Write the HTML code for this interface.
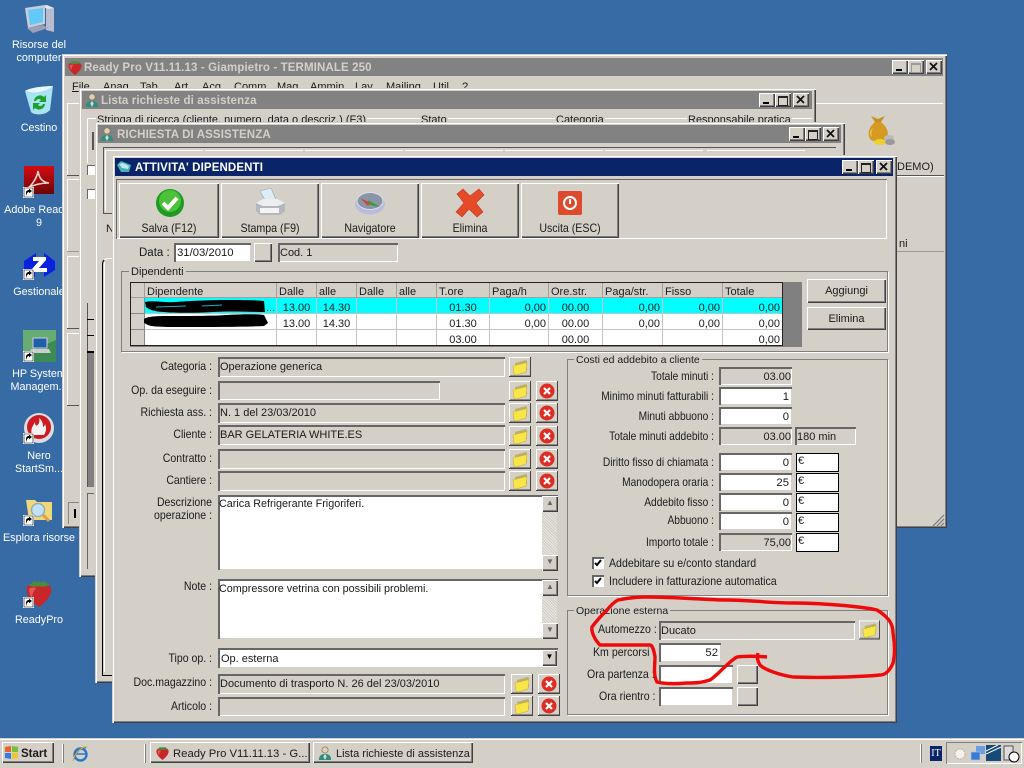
<!DOCTYPE html>
<html><head><meta charset="utf-8"><style>
html,body{margin:0;padding:0}
body{width:1024px;height:768px;overflow:hidden;position:relative;background:#376ba6;font:11px/14px "Liberation Sans",Arial,sans-serif;color:#1a1a1a}
div,svg{position:absolute}
.t{position:absolute;white-space:nowrap;height:14px;line-height:14px;margin-top:1px}
.l{position:absolute;left:112px;width:100px;text-align:right;white-space:nowrap;height:14px;line-height:14px;font-size:12px;transform:scaleX(.878);transform-origin:100% 50%}
.r{position:absolute;left:568px;width:146px;text-align:right;white-space:nowrap;height:14px;line-height:14px;font-size:12px;transform:scaleX(.85);transform-origin:100% 50%}
.c{font-size:12px;transform:scaleX(.882);transform-origin:0 50%}
.bt{font-size:12px;transform:scaleX(.885);transform-origin:50% 50%;margin-top:0}
.d{color:#fff;text-align:center;width:78px;left:0;line-height:13px;white-space:nowrap;font-size:10.8px}
.win{background:#d4d0c8;box-shadow:inset 1px 1px #d4d0c8,inset 2px 2px #fff,inset -1px -1px #404040,inset -2px -2px #808080}
.tb{height:18px;background:#828282}
.tt{position:absolute;font-weight:bold;color:#d4d0c8;font-size:11.5px;line-height:18px;white-space:nowrap;letter-spacing:.12px;margin-top:1px}
.btn{background:#d4d0c8;box-shadow:inset 1px 1px #fff,inset -1px -1px #404040,inset -2px -2px #808080;text-align:center}
.sb{width:16px;height:14px;background:#d4d0c8;box-shadow:inset 1px 1px #fff,inset -1px -1px #404040,inset -2px -2px #808080}
.sunk{background:#d4d0c8;box-shadow:inset 2px 2px #666,inset -1px -1px #fff}
.inp{background:#fff;box-shadow:inset 2px 2px #666,inset -1px -1px #d4d0c8;text-align:right;line-height:18px;box-sizing:border-box;padding-right:3px;padding-top:1px;white-space:nowrap;font-size:11.3px}
.eu{background:#fff;box-shadow:inset 0 0 0 1px #000;line-height:16px;box-sizing:border-box;padding-left:2px;font-size:11px}
.sunk.txt{line-height:18px;padding-left:2px;padding-top:1px;box-sizing:border-box;white-space:nowrap;overflow:hidden;font-size:11px}
.grp{box-shadow:inset 0 0 0 1px #808080,1px 1px #fff}
.lb{position:absolute;background:#d4d0c8;padding:0 2px;white-space:nowrap;line-height:13px;margin-top:1px}
table{border-collapse:collapse;table-layout:fixed;position:absolute}
td{padding:6px 2px 0;height:9px;border:1px solid #c4c4c4;line-height:9px;text-align:right;white-space:nowrap;font-size:11px}
tr.h td{background:#d4d0c8;text-align:left;border-color:#a0a0a0;border-top:0}
td.f{background:#d4d0c8;border-color:#888}
tr.s td{background:#00ffff}
tr.s td.f{background:#d4d0c8}
.ln{height:1px;background:#fff}
.dk{background:#555}
.ar{font-size:8px;line-height:14px;color:#666}
.tk{background:repeating-linear-gradient(45deg,#e8e6e0 0 1px,#cfccc4 1px 2px)}
.m{position:absolute;top:80px;white-space:nowrap;line-height:14px}
</style></head><body>

<svg width="0" height="0" style="position:absolute"><defs>
<symbol id="sb" viewBox="0 0 32 32"><path d="M16 31C8 25 2 18 3 11c1-4 6-5 13-4 7-1 12 0 13 4 1 7-5 14-13 20z" fill="#c9262a"/><path d="M6 11c3-1 5-1 7 0-3 3-5 7-4 11C6 18 5 14 6 11z" fill="#e2585a"/><path d="M5 7c4-1 4-3 6-4 1 2 3 2 5 0 2 2 3 2 5 0 2 1 3 3 6 4-3 3-8 2-11 2S8 10 5 7z" fill="#4d8a3a"/></symbol>
<symbol id="pers" viewBox="0 0 16 16"><circle cx="8" cy="4.500" r="3.600" fill="#e4cdb0" stroke="#7a7a60" stroke-width=".8"/><path d="M1 16c0-5 3-7 7-7s7 2 7 7z" fill="#2f8f7f"/><path d="M8 9l-2 3 2 4 2-4z" fill="#d8d8d8"/></symbol>
<symbol id="fold" viewBox="0 0 22 22"><path d="M0 1h22v20H0z" fill="#d4d0c8"/><path d="M0 1h21v1H1v18H0z" fill="#fff"/><path d="M0 21h22V1h-1v19H0z" fill="#444"/><path d="M1 20h20v-1H1z" fill="#888"/><path d="M6 7l11-3 1 1v9l-11 3z" fill="#bbb06a"/><path d="M4 10l12-3 2 0-1 9-10 3-2-1z" fill="#f8e648" stroke="#c8b040" stroke-width=".6"/></symbol>
<symbol id="del" viewBox="0 0 22 22"><path d="M0 1h22v20H0z" fill="#d4d0c8"/><path d="M0 1h21v1H1v18H0z" fill="#fff"/><path d="M0 21h22V1h-1v19H0z" fill="#444"/><path d="M1 20h20v-1H1z" fill="#888"/><circle cx="11" cy="11" r="7.500" fill="#dc2e22"/><path d="M8 8l6 6M14 8l-6 6" stroke="#fff" stroke-width="2.200"/></symbol>
<symbol id="sc" viewBox="0 0 11 11"><path d="M0 0h11v11H0z" fill="#fff"/><path d="M1 1h9v9H1z" fill="#fff" stroke="#000" stroke-width=".6"/><path d="M3 9V6c0-2 1-3 3-3V1.800L9 4 6 6.300V5C4.500 5 4 6 3 9z" fill="#000"/></symbol>
</defs></svg>

<!-- desktop icons -->
<svg style="left:22px;top:2px" width="34" height="34" viewBox="0 0 34 34"><path d="M24 4l8 2v24l-8-2z" fill="#b8bcd0"/><path d="M19 4l6-1 7 3-6 1z" fill="#e4e6f0"/><path d="M3 6l20-3v19L6 26z" fill="#c8ccd8"/><path d="M6 8l15-2v14L8 23z" fill="#62c8f6"/><path d="M5 26l16-3 5 3-15 5z" fill="#9aa0b8"/></svg>
<div class="t d" style="top:38px">Risorse del<br>computer</div>
<svg style="left:23px;top:84px" width="32" height="34" viewBox="0 0 32 34"><path d="M2 7c8 3 20 2 28-5l-3 24c-4 5-15 6-19 2z" fill="#a9e3f2"/><path d="M2 7c8 3 20 2 28-5-6 0-22 1-28 5z" fill="#e6f8fc"/><path d="M11 17a6 6 0 0 1 10-4l2-2v7h-7l2-2a3 3 0 0 0-5 1zM22 20a6 6 0 0 1-10 4l-2 2v-7h7l-2 2a3 3 0 0 0 5-1z" fill="#1ea02e"/></svg>
<div class="t d" style="top:121px">Cestino</div>
<svg style="left:24px;top:166px" width="30" height="30" viewBox="0 0 30 30"><defs><linearGradient id="ag" x1="0" y1="0" x2="0" y2="1"><stop offset="0" stop-color="#d40c12"/><stop offset="1" stop-color="#6e0407"/></linearGradient></defs><rect width="30" height="28" fill="url(#ag)"/><path d="M4 22c4-3 9-10 10-17 1 6 3 11 11 12-7 0-14 1-21 5z" fill="none" stroke="#f3d3d0" stroke-width="1.600"/></svg>
<svg style="left:23px;top:187px" width="11" height="11"><use href="#sc"/></svg>
<div class="t d" style="top:203px">Adobe Reader<br>9</div>
<svg style="left:24px;top:252px" width="31" height="28" viewBox="0 0 31 28"><path d="M0 9L12 1v6h8V1l11 8v9l-11 7v-5H11v5L0 18z" fill="#0a22e0"/><path d="M9 5h13v3L15 16h8v4H8v-3l7-8H9z" fill="#fff"/></svg>
<svg style="left:23px;top:269px" width="11" height="11"><use href="#sc"/></svg>
<div class="t d" style="top:285px">Gestionale</div>
<svg style="left:23px;top:330px" width="33" height="32" viewBox="0 0 33 32"><rect width="33" height="32" fill="#67ac72"/><path d="M0 24l33-14v22H0z" fill="#3c8a54"/><rect x="10" y="8" width="14" height="10" fill="#1d5fa8" stroke="#ccd"/><path d="M8 19h18l2 4H7z" fill="#ccc"/></svg>
<svg style="left:23px;top:351px" width="11" height="11"><use href="#sc"/></svg>
<div class="t d" style="top:367px">HP System<br>Managem...</div>
<svg style="left:23px;top:412px" width="32" height="32" viewBox="0 0 32 32"><circle cx="16" cy="16" r="15" fill="#ddd"/><circle cx="16" cy="15" r="12" fill="#cc1b22"/><path d="M9 23c-2-6 1-9 3-13 0 4 2 5 4 1 1-3 0-5 0-5 4 3 4 7 4 9 2-1 2-3 2-3 2 4 1 8-1 11z" fill="#f2f2f2"/></svg>
<svg style="left:23px;top:433px" width="11" height="11"><use href="#sc"/></svg>
<div class="t d" style="top:449px">Nero<br>StartSm...</div>
<svg style="left:25px;top:496px" width="30" height="30" viewBox="0 0 30 30"><path d="M1 4h9l2 2h15v18H4z" fill="#f0d778"/><circle cx="13" cy="14" r="6.500" fill="#bfe2f6" stroke="#9ab" stroke-width="1.500"/><path d="M18 19l6 6" stroke="#d8a050" stroke-width="3"/></svg>
<svg style="left:23px;top:515px" width="11" height="11"><use href="#sc"/></svg>
<div class="t d" style="top:531px">Esplora risorse</div>
<svg style="left:24px;top:576px" width="30" height="34"><use href="#sb"/></svg>
<svg style="left:23px;top:597px" width="11" height="11"><use href="#sc"/></svg>
<div class="t d" style="top:613px">ReadyPro</div>

<!-- main window -->
<div class="win" style="left:62px;top:54px;width:885px;height:474px"></div>
<div class="tb" style="left:65px;top:58px;width:878px"></div>
<svg style="left:67px;top:59px" width="16" height="17"><use href="#sb"/></svg>
<div class="tt" style="left:84px;top:58px">Ready Pro V11.11.13 - Giampietro - TERMINALE 250</div>
<div class="sb" style="left:892px;top:60px"></div><div style="left:896px;top:69px;width:6px;height:2px;background:#000"></div>
<div class="sb" style="left:908px;top:60px"></div><div style="left:911px;top:63px;width:8px;height:7px;border:1px solid #999;border-top-width:2px"></div>
<div class="sb" style="left:926px;top:60px"></div><svg style="left:926px;top:60px" width="16" height="14"><path d="M4 3l7 7M11 3l-7 7" stroke="#111" stroke-width="1.800"/></svg>
<span class="m" style="left:72px"><u>F</u>ile</span><span class="m" style="left:103px">Anag.</span><span class="m" style="left:140px">Tab.</span><span class="m" style="left:174px">Art.</span><span class="m" style="left:202px">Acq.</span><span class="m" style="left:234px">Comm.</span><span class="m" style="left:277px">Mag.</span><span class="m" style="left:310px">Ammin.</span><span class="m" style="left:355px">Lav.</span><span class="m" style="left:386px">Mailing</span><span class="m" style="left:433px">Util.</span><span class="m" style="left:462px">?</span>

<div class="ln" style="left:815px;top:103px;width:128px"></div>
<svg style="left:864px;top:115px" width="32" height="34" viewBox="0 0 32 34"><path d="M7 1l7 3 7-3-4 6h-6z" fill="#c88f1e"/><path d="M11 7h6c6 5 8 10 6 16-2 5-14 5-17 1C3 18 5 12 11 7z" fill="#d49a24"/><path d="M9 13c-2 3-2 6-1 9-3-3-2-7 1-9z" fill="#f2cf6e"/><ellipse cx="16" cy="27" rx="6" ry="3" fill="#ecd22a"/><ellipse cx="25" cy="23" rx="5" ry="3" fill="#bbb"/><ellipse cx="26" cy="27" rx="5" ry="3" fill="#999"/></svg>
<div class="t" style="left:897px;top:159px">DEMO)</div>
<div class="dk" style="left:897px;top:175px;width:47px;height:1px"></div><div class="ln" style="left:897px;top:176px;width:47px"></div>
<div class="t" style="left:899px;top:236px">ni</div>
<div class="ln" style="left:897px;top:251px;width:47px;background:#999"></div>
<svg style="left:932px;top:514px" width="13" height="13" viewBox="0 0 13 13"><path d="M12 1L1 12M12 5L5 12M12 9l-3 3" stroke="#777" stroke-width="1.200"/></svg>
<div class="ln" style="left:67px;top:103px;width:12px"></div><div class="ln" style="left:67px;top:103px;width:1px;height:72px"></div><div class="dk" style="left:67px;top:175px;width:12px;height:1px"></div>
<div class="ln" style="left:67px;top:179px;width:12px"></div><div class="ln" style="left:67px;top:179px;width:1px;height:72px"></div><div class="dk" style="left:67px;top:251px;width:12px;height:1px;background:#999"></div>
<div class="ln" style="left:67px;top:256px;width:12px"></div><div class="ln" style="left:67px;top:256px;width:1px;height:72px"></div><div class="dk" style="left:67px;top:328px;width:12px;height:1px"></div>
<div class="ln" style="left:67px;top:333px;width:12px"></div><div class="ln" style="left:67px;top:333px;width:1px;height:72px"></div><div class="dk" style="left:67px;top:405px;width:12px;height:1px"></div>
<div style="left:68px;top:502px;width:11px;height:22px;box-shadow:inset 1px 1px #888"></div><div style="left:74px;top:509px;width:2px;height:9px;background:#000"></div>

<!-- Lista window -->
<div class="win" style="left:79px;top:88px;width:737px;height:489px"></div>
<div class="tb" style="left:82px;top:91px;width:730px"></div>
<svg style="left:85px;top:92px" width="14" height="16"><use href="#pers"/></svg>
<div class="tt" style="left:101px;top:91px">Lista richieste di assistenza</div>
<div class="sb" style="left:759px;top:93px"></div><div style="left:763px;top:102px;width:6px;height:2px;background:#000"></div>
<div class="sb" style="left:775px;top:93px"></div><div style="left:778px;top:96px;width:8px;height:7px;border:1px solid #222;border-top-width:2px"></div>
<div class="sb" style="left:793px;top:93px"></div><svg style="left:793px;top:93px" width="16" height="14"><path d="M4 3l7 7M11 3l-7 7" stroke="#111" stroke-width="1.800"/></svg>
<div class="ln" style="left:87px;top:118px;width:725px"></div>
<div class="ln" style="left:87px;top:118px;width:1px;height:45px"></div>
<div style="left:92px;top:132px;width:2px;height:18px;background:#555"></div>
<div class="t" style="left:96px;top:112px;background:#d4d0c8;padding:0 1px">Stringa di ricerca (cliente, numero, data o descriz.) (F3)</div>
<div class="t" style="left:420px;top:112px;background:#d4d0c8;padding:0 1px">Stato</div>
<div class="t" style="left:555px;top:112px;background:#d4d0c8;padding:0 1px">Categoria</div>
<div class="t" style="left:687px;top:112px;background:#d4d0c8;padding:0 1px">Responsabile pratica</div>
<div style="left:87px;top:165px;width:8px;height:10px;background:#fff;box-shadow:inset 1px 1px #666"></div>
<div style="left:87px;top:189px;width:8px;height:10px;background:#fff;box-shadow:inset 1px 1px #666"></div>
<div style="left:87px;top:303px;width:7px;height:184px;background:#808080;box-shadow:inset 1px 0 #555"></div>
<div style="left:87px;top:303px;width:7px;height:49px;background:#d4d0c8;box-shadow:inset 1px 0 #555"></div>
<div style="left:87px;top:319px;width:7px;height:1px;background:#000"></div><div style="left:87px;top:335px;width:7px;height:1px;background:#000"></div><div style="left:87px;top:351px;width:7px;height:2px;background:#000"></div>
<div style="left:87px;top:493px;width:7px;height:76px;box-shadow:inset 1px 1px #666;background:#d4d0c8"></div>

<!-- Richiesta window -->
<div class="win" style="left:95px;top:122px;width:750px;height:561px"></div>
<div class="tb" style="left:98px;top:125px;width:743px"></div>
<svg style="left:100px;top:126px" width="14" height="16"><use href="#pers"/></svg>
<div class="tt" style="left:117px;top:125px">RICHIESTA DI ASSISTENZA</div>
<div class="sb" style="left:789px;top:127px"></div><div style="left:793px;top:136px;width:6px;height:2px;background:#000"></div>
<div class="sb" style="left:805px;top:127px"></div><div style="left:808px;top:130px;width:8px;height:7px;border:1px solid #222;border-top-width:2px"></div>
<div class="sb" style="left:823px;top:127px"></div><svg style="left:823px;top:127px" width="16" height="14"><path d="M4 3l7 7M11 3l-7 7" stroke="#111" stroke-width="1.800"/></svg>
<div class="dk" style="left:103px;top:147px;width:733px;height:1px"></div>
<div class="ln" style="left:105px;top:150px;width:98px"></div><div class="ln" style="left:205px;top:150px;width:98px"></div><div class="ln" style="left:305px;top:150px;width:98px"></div><div class="ln" style="left:405px;top:150px;width:98px"></div><div class="ln" style="left:505px;top:150px;width:98px"></div><div class="ln" style="left:605px;top:150px;width:98px"></div><div class="ln" style="left:707px;top:150px;width:98px"></div>
<div class="dk" style="left:103px;top:147px;width:1px;height:66px"></div>
<div class="ln" style="left:105px;top:150px;width:1px;height:61px"></div>
<div class="dk" style="left:103px;top:213px;width:9px;height:1px"></div>
<div class="t" style="left:106px;top:221px">N</div>
<div style="left:102px;top:258px;width:10px;height:418px;border-left:1px solid #000;border-top:1px solid #fff;border-bottom:1px solid #000;border-top-left-radius:6px;box-sizing:border-box"></div>
<div class="ln" style="left:104px;top:262px;width:1px;height:410px"></div>

<!-- Attivita window -->
<div class="win" style="left:112px;top:155px;width:785px;height:568px"></div>
<div style="left:115px;top:158px;width:778px;height:18px;background:#0a246a"></div>
<svg style="left:116px;top:160px" width="16" height="14" viewBox="0 0 16 14"><path d="M1 5l4-4 10 4-2 7H5z" fill="#47b0b8"/><path d="M3 4l4-1 6 3-1 3-6-1z" fill="#bfe8e8"/></svg>
<div class="tt" style="left:135px;top:158px;color:#fff">ATTIVITA' DIPENDENTI</div>
<div class="sb" style="left:842px;top:160px"></div><div style="left:846px;top:169px;width:6px;height:2px;background:#000"></div>
<div class="sb" style="left:858px;top:160px"></div><div style="left:861px;top:163px;width:8px;height:7px;border:1px solid #222;border-top-width:2px"></div>
<div class="sb" style="left:876px;top:160px"></div><svg style="left:876px;top:160px" width="16" height="14"><path d="M4 3l7 7M11 3l-7 7" stroke="#111" stroke-width="1.800"/></svg>

<!-- toolbar -->
<div style="left:116px;top:179px;width:771px;height:60px;box-shadow:inset 1px 1px #666,inset -1px -1px #fff"></div>
<div class="btn" style="left:119px;top:183px;width:100px;height:55px"></div>
<div class="btn" style="left:221px;top:183px;width:98px;height:55px"></div>
<div class="btn" style="left:321px;top:183px;width:98px;height:55px"></div>
<div class="btn" style="left:421px;top:183px;width:98px;height:55px"></div>
<div class="btn" style="left:521px;top:183px;width:98px;height:55px"></div>
<svg style="left:155px;top:188px" width="30" height="30" viewBox="0 0 30 30"><circle cx="15" cy="15" r="14" fill="#1f9a22"/><circle cx="15" cy="13" r="11" fill="#4cc23a"/><path d="M8 15l5 5 9-10" fill="none" stroke="#fff" stroke-width="4"/></svg>
<svg style="left:254px;top:188px" width="32" height="30" viewBox="0 0 32 30"><path d="M6 3l11-3 5 12H11z" fill="#dceef4" stroke="#9ab" stroke-width=".6"/><path d="M2 15l7-4h15l7 4v8l-5 4H6l-4-4z" fill="#b4b8bc"/><path d="M2 15l7-4h15l7 4-7 3H9z" fill="#eceef0"/><path d="M6 20h19v5H6z" fill="#f4f4f4"/></svg>
<svg style="left:355px;top:191px" width="31" height="24" viewBox="0 0 31 24"><ellipse cx="15" cy="13" rx="15" ry="10.500" fill="#bbbbde"/><ellipse cx="15" cy="10" rx="13" ry="8.500" fill="#8a96a8" stroke="#dde" stroke-width="1"/><path d="M5 7l11 5-3 3z" fill="#c84a3a"/><path d="M13 9l12 7-10-2z" fill="#3a9a3a"/></svg>
<svg style="left:455px;top:188px" width="30" height="30" viewBox="0 0 30 30"><path d="M2 6l6-5 7 7 9-7 5 6-8 8 7 9-6 5-8-8-7 8-6-5 8-9z" fill="#e64a28" stroke="#b93a1a" stroke-width=".6"/></svg>
<svg style="left:558px;top:191px" width="24" height="24" viewBox="0 0 24 24"><rect width="24" height="24" rx="2" fill="#de4a2c"/><circle cx="12" cy="12" r="6" fill="none" stroke="#fff" stroke-width="2"/><path d="M12 8v5" stroke="#fff" stroke-width="2"/></svg>
<div class="t bt" style="left:119px;top:221px;width:100px;text-align:center">Salva (F12)</div>
<div class="t bt" style="left:221px;top:221px;width:98px;text-align:center">Stampa (F9)</div>
<div class="t bt" style="left:321px;top:221px;width:98px;text-align:center">Navigatore</div>
<div class="t bt" style="left:421px;top:221px;width:98px;text-align:center">Elimina</div>
<div class="t bt" style="left:521px;top:221px;width:98px;text-align:center">Uscita (ESC)</div>

<!-- data -->
<div class="t" style="left:139px;top:245px;font-size:11.5px">Data :</div>
<div class="inp" style="left:174px;top:243px;width:77px;height:19px;text-align:left;padding-left:3px">31/03/2010</div>
<div class="btn" style="left:254px;top:243px;width:18px;height:19px"></div>
<div class="sunk txt" style="left:278px;top:243px;width:120px;height:19px">Cod. 1</div>

<!-- Dipendenti -->
<div class="grp" style="left:121px;top:271px;width:767px;height:81px"></div>
<div class="lb" style="left:129px;top:265px">Dipendenti</div>
<div style="left:130px;top:282px;width:672px;height:65px;background:#808080"></div>
<table style="left:130px;top:282px;width:653px;background:#fff;outline:1px solid #222;outline-offset:-1px">
<colgroup><col style="width:14px"><col style="width:132px"><col style="width:40px"><col style="width:40px"><col style="width:40px"><col style="width:40px"><col style="width:53px"><col style="width:59px"><col style="width:54px"><col style="width:60px"><col style="width:60px"><col style="width:60px"></colgroup>
<tr class="h"><td class="f"></td><td>Dipendente</td><td>Dalle</td><td>alle</td><td>Dalle</td><td>alle</td><td>T.ore</td><td>Paga/h</td><td>Ore.str.</td><td>Paga/str.</td><td>Fisso</td><td>Totale</td></tr>
<tr class="s"><td class="f"></td><td></td><td style="text-align:center">13.00</td><td style="text-align:center">14.30</td><td></td><td></td><td style="text-align:center">01.30</td><td>0,00</td><td style="text-align:center">00.00</td><td>0,00</td><td>0,00</td><td>0,00</td></tr>
<tr><td class="f"></td><td></td><td style="text-align:center">13.00</td><td style="text-align:center">14.30</td><td></td><td></td><td style="text-align:center">01.30</td><td>0,00</td><td style="text-align:center">00.00</td><td>0,00</td><td>0,00</td><td>0,00</td></tr>
<tr><td class="f"></td><td></td><td></td><td></td><td></td><td></td><td style="text-align:center">03.00</td><td></td><td style="text-align:center">00.00</td><td></td><td></td><td>0,00</td></tr>
</table>
<div class="t" style="left:266px;top:300px;color:#444">...</div>
<svg style="left:140px;top:296px" width="140" height="34" viewBox="0 0 140 34"><path d="M5 6c10-2 18 1 30 0s38-2 50-2 30 0 39 1l1 11c-14 0-34-1-52 0s-38 1-50 0-14-3-17-5zM4 23c4-3 15-3 28-3s40 0 55-1 32-1 37 0l4 8-4 3c-20 1-62 1-90 1s-25-2-30-4z" fill="#000"/><path d="M16 11l30-1M62 10l20-1" stroke="#2ac" stroke-width="1"/></svg>
<div class="btn" style="left:807px;top:279px;width:79px;height:24px;line-height:25px">Aggiungi</div>
<div class="btn" style="left:807px;top:307px;width:79px;height:23px;line-height:24px">Elimina</div>

<!-- left form -->
<div class="l" style="top:359px">Categoria :</div>
<div class="sunk txt" style="left:218px;top:357px;width:287px;height:20px">Operazione generica</div>
<div class="l" style="top:383px">Op. da eseguire :</div>
<div class="sunk txt" style="left:218px;top:381px;width:222px;height:19px"></div>
<div class="l" style="top:405px">Richiesta ass. :</div>
<div class="sunk txt" style="left:218px;top:403px;width:287px;height:20px">N. 1 del 23/03/2010</div>
<div class="l" style="top:427px">Cliente :</div>
<div class="sunk txt" style="left:218px;top:425px;width:287px;height:20px">BAR GELATERIA WHITE.ES</div>
<div class="l" style="top:451px">Contratto :</div>
<div class="sunk txt" style="left:218px;top:449px;width:287px;height:20px"></div>
<div class="l" style="top:473px">Cantiere :</div>
<div class="sunk txt" style="left:218px;top:471px;width:287px;height:20px"></div>
<svg style="left:509px;top:356px" width="22" height="22"><use href="#fold"/></svg>
<svg style="left:509px;top:380px" width="22" height="22"><use href="#fold"/></svg><svg style="left:536px;top:380px" width="22" height="22"><use href="#del"/></svg>
<svg style="left:509px;top:402px" width="22" height="22"><use href="#fold"/></svg><svg style="left:536px;top:402px" width="22" height="22"><use href="#del"/></svg>
<svg style="left:509px;top:425px" width="22" height="22"><use href="#fold"/></svg><svg style="left:536px;top:425px" width="22" height="22"><use href="#del"/></svg>
<svg style="left:509px;top:448px" width="22" height="22"><use href="#fold"/></svg><svg style="left:536px;top:448px" width="22" height="22"><use href="#del"/></svg>
<svg style="left:509px;top:470px" width="22" height="22"><use href="#fold"/></svg><svg style="left:536px;top:470px" width="22" height="22"><use href="#del"/></svg>
<div class="l" style="top:495px">Descrizione</div><div class="l" style="top:508px">operazione :</div>
<div class="inp" style="left:218px;top:495px;width:340px;height:75px;text-align:left;padding:2px 0 0 1px;line-height:14px;font-size:10.8px">Carica Refrigerante Frigoriferi.</div>
<div class="tk" style="left:542px;top:497px;width:15px;height:72px"></div>
<div class="btn ar" style="left:542px;top:496px;width:16px;height:16px">▲</div>
<div class="btn ar" style="left:542px;top:555px;width:16px;height:16px">▼</div>
<div class="l" style="top:579px">Note :</div>
<div class="inp" style="left:218px;top:579px;width:340px;height:60px;text-align:left;padding:3px 0 0 1px;line-height:14px;font-size:10.8px">Compressore vetrina con possibili problemi.</div>
<div class="tk" style="left:542px;top:581px;width:15px;height:57px"></div>
<div class="btn ar" style="left:542px;top:580px;width:16px;height:16px">▲</div>
<div class="btn ar" style="left:542px;top:623px;width:16px;height:16px">▼</div>
<div class="l" style="top:651px">Tipo op. :</div>
<div class="inp" style="left:218px;top:648px;width:340px;height:20px;text-align:left;padding-left:3px;padding-top:2px;font-size:11px">Op. esterna</div>
<div class="btn" style="left:542px;top:650px;width:15px;height:16px;line-height:14px;font-size:8px;color:#000">▼</div>
<div class="l" style="top:675px">Doc.magazzino :</div>
<div class="sunk txt" style="left:218px;top:674px;width:287px;height:20px">Documento di trasporto N. 26 del 23/03/2010</div>
<div class="l" style="top:699px">Articolo :</div>
<div class="sunk txt" style="left:218px;top:697px;width:287px;height:19px"></div>
<svg style="left:511px;top:673px" width="22" height="22"><use href="#fold"/></svg><svg style="left:538px;top:673px" width="22" height="22"><use href="#del"/></svg>
<svg style="left:511px;top:695px" width="22" height="22"><use href="#fold"/></svg><svg style="left:538px;top:695px" width="22" height="22"><use href="#del"/></svg>

<!-- Costi -->
<div class="grp" style="left:567px;top:359px;width:321px;height:237px"></div>
<div class="lb" style="left:574px;top:353px;font-size:10.5px">Costi ed addebito a cliente</div>
<div class="r" style="top:369px">Totale minuti :</div><div class="sunk txt" style="left:719px;top:367px;width:73px;height:18px;text-align:right;padding-right:1px">03.00</div>
<div class="r" style="top:389px">Minimo minuti fatturabili :</div><div class="inp" style="left:719px;top:387px;width:73px;height:18px">1</div>
<div class="r" style="top:409px">Minuti abbuono :</div><div class="inp" style="left:719px;top:407px;width:73px;height:18px">0</div>
<div class="r" style="top:429px">Totale minuti addebito :</div><div class="sunk txt" style="left:719px;top:427px;width:73px;height:18px;text-align:right;padding-right:1px">03.00</div>
<div class="sunk txt" style="left:795px;top:427px;width:61px;height:18px;padding-left:2px">180 min</div>
<div class="r" style="top:455px">Diritto fisso di chiamata :</div><div class="inp" style="left:719px;top:453px;width:73px;height:18px">0</div><div class="eu" style="left:796px;top:453px;width:43px;height:19px">€</div>
<div class="r" style="top:475px">Manodopera oraria :</div><div class="inp" style="left:719px;top:473px;width:73px;height:18px">25</div><div class="eu" style="left:796px;top:473px;width:43px;height:19px">€</div>
<div class="r" style="top:495px">Addebito fisso :</div><div class="inp" style="left:719px;top:493px;width:73px;height:18px">0</div><div class="eu" style="left:796px;top:493px;width:43px;height:19px">€</div>
<div class="r" style="top:513px">Abbuono :</div><div class="inp" style="left:719px;top:512px;width:73px;height:18px">0</div><div class="eu" style="left:796px;top:513px;width:43px;height:19px">€</div>
<div class="r" style="top:535px">Importo totale :</div><div class="sunk txt" style="left:719px;top:533px;width:73px;height:18px;text-align:right;padding-right:1px">75,00</div><div class="eu" style="left:796px;top:533px;width:43px;height:19px">€</div>
<div style="left:592px;top:557px;width:12px;height:12px;background:#fff;box-shadow:inset 2px 2px #666"></div><svg style="left:592px;top:557px" width="12" height="12"><path d="M3 6l2 2 4-5" fill="none" stroke="#000" stroke-width="2"/></svg>
<div class="t c" style="left:609px;top:555px">Addebitare su e/conto standard</div>
<div style="left:592px;top:575px;width:12px;height:12px;background:#fff;box-shadow:inset 2px 2px #666"></div><svg style="left:592px;top:575px" width="12" height="12"><path d="M3 6l2 2 4-5" fill="none" stroke="#000" stroke-width="2"/></svg>
<div class="t c" style="left:609px;top:573px">Includere in fatturazione automatica</div>

<!-- Operazione esterna -->
<div class="grp" style="left:567px;top:610px;width:321px;height:105px"></div>
<div class="lb" style="left:574px;top:604px;font-size:10.5px">Operazione esterna</div>
<div class="t c" style="left:598px;top:621px">Automezzo :</div>
<div class="sunk txt" style="left:659px;top:621px;width:196px;height:19px">Ducato</div>
<svg style="left:859px;top:619px" width="21" height="22"><use href="#fold"/></svg>
<div class="t c" style="left:593px;top:644px">Km percorsi :</div>
<div class="inp" style="left:659px;top:643px;width:62px;height:19px">52</div>
<div class="t c" style="left:587px;top:666px">Ora partenza :</div>
<div class="inp" style="left:659px;top:665px;width:74px;height:19px"></div>
<div class="btn" style="left:737px;top:665px;width:21px;height:19px"></div>
<div class="t c" style="left:599px;top:688px">Ora rientro :</div>
<div class="inp" style="left:659px;top:687px;width:74px;height:19px"></div>
<div class="btn" style="left:737px;top:687px;width:21px;height:19px"></div>
<svg style="left:0;top:0" width="1024" height="768"><path d="M645 597C680 597 705 600 727 600S770 603 793 603 860 606 877 610C890 618 893 625 893 633 895 645 895 655 893 663 890 670 886 675 880 675 860 677 820 678 793 677 780 675 765 670 760 665 757 660 757 657 758 653M767 657C755 656 745 656 737 657 728 662 718 675 710 680 700 683 695 683 687 683 675 684 665 684 657 682 653 675 655 665 655 657 654 650 652 645 650 645 630 645 615 645 600 645 595 640 591 632 592 627 597 620 602 615 607 610 611 605 614 602 618 600 628 598 636 597 645 597" fill="none" stroke="#ee0a0a" stroke-width="3.400"/></svg>

<!-- taskbar -->
<div style="left:0;top:738px;width:1024px;height:30px;background:#d4d0c8;box-shadow:inset 0 1px #d4d0c8,inset 0 2px #fff"></div>
<div class="btn" style="left:2px;top:742px;width:52px;height:21px"></div>
<svg style="left:4px;top:745px" width="15" height="15" viewBox="0 0 15 15"><path d="M1 2l6-1v6H1z" fill="#e8622a"/><path d="M8 1l6 1v5H8z" fill="#78c03a"/><path d="M1 8h6v6l-6-1z" fill="#3a7ae0"/><path d="M8 8h6v5l-6 1z" fill="#f2c62a"/></svg>
<div class="t" style="left:21px;top:746px;font-weight:bold;font-size:11.5px">Start</div>
<div style="left:62px;top:744px;width:1px;height:19px;background:#fff;box-shadow:1px 0 #808080"></div>
<svg style="left:72px;top:746px" width="16" height="16" viewBox="0 0 16 16"><circle cx="8.500" cy="8.500" r="6" fill="none" stroke="#2a78cc" stroke-width="2.400"/><path d="M3 8h11M14 2C10 0 4 6 2 13" fill="none" stroke="#2a78cc" stroke-width="1.500"/><path d="M15 1C12 0 3 5 1 15" fill="none" stroke="#e8a828" stroke-width="1"/></svg>
<div style="left:144px;top:744px;width:1px;height:19px;background:#fff;box-shadow:1px 0 #808080"></div>
<div class="btn" style="left:150px;top:742px;width:160px;height:21px"></div>
<svg style="left:155px;top:745px" width="15" height="16"><use href="#sb"/></svg>
<div class="t" style="left:173px;top:746px;font-size:11.3px">Ready Pro V11.11.13 - G...</div>
<div class="btn" style="left:313px;top:742px;width:160px;height:21px"></div>
<svg style="left:318px;top:745px" width="14" height="16"><use href="#pers"/></svg>
<div class="t" style="left:336px;top:746px">Lista richieste di assistenza</div>
<div style="left:920px;top:744px;width:1px;height:19px;background:#fff;box-shadow:1px 0 #808080"></div>
<div style="left:930px;top:746px;width:12px;height:15px;background:#0a246a;color:#fff;font:10px/15px 'Liberation Serif',serif;text-align:center">IT</div>
<div style="left:946px;top:742px;width:76px;height:22px;box-shadow:inset 1px 1px #808080,inset -1px -1px #fff"></div>
<svg style="left:952px;top:746px" width="16" height="16"><circle cx="8" cy="8" r="5" fill="#f4f2ea" stroke="#b8b4a0" stroke-dasharray="2 1"/></svg>
<svg style="left:970px;top:745px" width="16" height="17" viewBox="0 0 16 17"><rect x="6" y="1" width="9" height="8" fill="#6a9ee0"/><rect x="1" y="7" width="9" height="8" fill="#3a7ad0" stroke="#a8c8f0" stroke-width=".7"/></svg>
<svg style="left:986px;top:745px" width="16" height="17" viewBox="0 0 16 17"><rect width="15" height="16" fill="#164a78"/><path d="M0 9l15-7M0 6l12-6" stroke="#fff"/></svg>
<svg style="left:1003px;top:745px" width="17" height="18" viewBox="0 0 17 18"><rect x="1" y="1" width="9" height="14" fill="#ddd" stroke="#555"/><circle cx="11" cy="12" r="5" fill="#fff" stroke="#000"/></svg>
</body></html>
